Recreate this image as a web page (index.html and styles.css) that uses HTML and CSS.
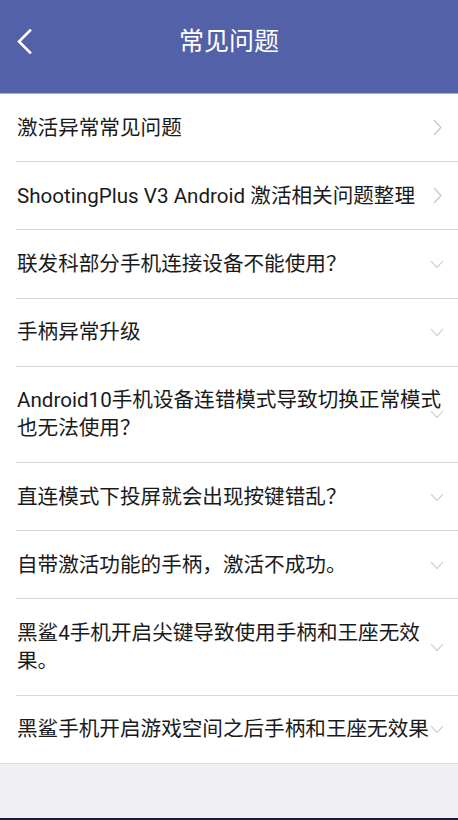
FILE: index.html
```html
<!DOCTYPE html>
<html lang="zh-CN">
<head>
<meta charset="utf-8">
<title>常见问题</title>
<link rel="stylesheet" href="styles.css">
</head>
<body>
<div class="page">
  <header class="topbar">
    <button class="back" aria-label="返回">
      <svg width="16" height="25" viewBox="0 0 16 25"><path d="M14 1.5 L3 12.5 L14 23.5" fill="none" stroke="#fff" stroke-width="2.6" stroke-linecap="square"/></svg>
    </button>
    <h1 class="title">常见问题</h1>
  </header>
  <ul class="list">
    <li class="item"><span class="text">激活异常常见问题</span><svg class="chev right" width="9" height="17" viewBox="0 0 9 17"><path d="M1 1 L8 8.5 L1 16" fill="none" stroke="#c4c4c8" stroke-width="1.1"/></svg></li>
    <li class="item"><span class="text">ShootingPlus V3 Android 激活相关问题整理</span><svg class="chev right" width="9" height="17" viewBox="0 0 9 17"><path d="M1 1 L8 8.5 L1 16" fill="none" stroke="#c4c4c8" stroke-width="1.1"/></svg></li>
    <li class="item"><span class="text">联发科部分手机连接设备不能使用？</span><svg class="chev down" width="14" height="9" viewBox="0 0 14 9"><path d="M1 1 L7 7.5 L13 1" fill="none" stroke="#c4c4c8" stroke-width="1.1"/></svg></li>
    <li class="item"><span class="text">手柄异常升级</span><svg class="chev down" width="14" height="9" viewBox="0 0 14 9"><path d="M1 1 L7 7.5 L13 1" fill="none" stroke="#c4c4c8" stroke-width="1.1"/></svg></li>
    <li class="item"><span class="text">Android10手机设备连错模式导致切换正常模式也无法使用？</span><svg class="chev down" width="14" height="9" viewBox="0 0 14 9"><path d="M1 1 L7 7.5 L13 1" fill="none" stroke="#c4c4c8" stroke-width="1.1"/></svg></li>
    <li class="item"><span class="text">直连模式下投屏就会出现按键错乱？</span><svg class="chev down" width="14" height="9" viewBox="0 0 14 9"><path d="M1 1 L7 7.5 L13 1" fill="none" stroke="#c4c4c8" stroke-width="1.1"/></svg></li>
    <li class="item"><span class="text">自带激活功能的手柄，激活不成功。</span><svg class="chev down" width="14" height="9" viewBox="0 0 14 9"><path d="M1 1 L7 7.5 L13 1" fill="none" stroke="#c4c4c8" stroke-width="1.1"/></svg></li>
    <li class="item"><span class="text">黑鲨4手机开启尖键导致使用手柄和王座无效果。</span><svg class="chev down" width="14" height="9" viewBox="0 0 14 9"><path d="M1 1 L7 7.5 L13 1" fill="none" stroke="#c4c4c8" stroke-width="1.1"/></svg></li>
    <li class="item"><span class="text">黑鲨手机开启游戏空间之后手柄和王座无效果</span><svg class="chev down" width="14" height="9" viewBox="0 0 14 9"><path d="M1 1 L7 7.5 L13 1" fill="none" stroke="#c4c4c8" stroke-width="1.1"/></svg></li>
  </ul>
  <div class="filler"></div>
  <div class="navedge"></div>
</div>
</body>
</html>
```

FILE: styles.css
```css
* { box-sizing: border-box; }
html, body {
  margin: 0;
  padding: 0;
  height: 100%;
}
body {
  background: #efeff4;
  font-family: Roboto, "Noto Sans CJK SC", "Noto Sans", sans-serif;
  color: #1a1a1a;
}
.page {
  display: flex;
  flex-direction: column;
  min-height: 100vh;
}
.topbar {
  position: relative;
  height: 94px;
  background: #5362a8;
  border-bottom: 1px solid #a3acd8;
  display: flex;
  align-items: flex-start;
  justify-content: center;
  padding-top: 23px;
}
.back {
  position: absolute;
  left: 16px;
  top: 29px;
  width: 20px;
  height: 26px;
  padding: 0;
  border: 0;
  background: none;
  display: flex;
}
.title {
  margin: 0;
  font-size: 25px;
  font-weight: 400;
  line-height: 38px;
  color: #fff;
  letter-spacing: 0;
}
.list {
  list-style: none;
  margin: 0;
  padding: 0 0 0 16px;
  background: #fff;
  border-bottom: 1px solid #dcdcdc;
}
.item {
  position: relative;
  display: flex;
  align-items: center;
  padding: 19.6px 16px 19.6px 1px;
  border-bottom: 1px solid #d8d8d8;
  font-size: 20.6px;
  line-height: 28px;
}
.item:last-child { border-bottom: 0; }
.text { flex: 1; }
.chev {
  position: absolute;
  top: 50%;
}
.chev.right {
  right: 16px;
  margin-top: -8.5px;
}
.chev.down {
  right: 14px;
  margin-top: -4px;
}
.filler { flex: 1; }
.navedge {
  height: 2px;
  background: #1d1a38;
}
```
